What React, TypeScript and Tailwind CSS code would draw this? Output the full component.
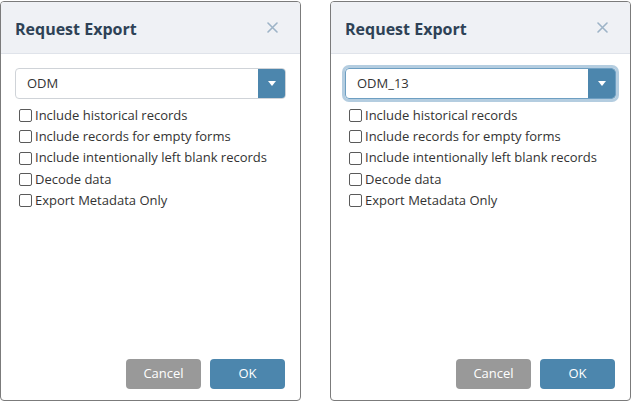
import React from "react";

const labels = [
  "Include historical records",
  "Include records for empty forms",
  "Include intentionally left blank records",
  "Decode data",
  "Export Metadata Only",
];

function Dialog({ value, focused }: { value: string; focused?: boolean }) {
  return (
    <div className="w-[301px] h-[400px] border border-[#7b7b7b] rounded-[4px] bg-white flex flex-col overflow-hidden">
      <div className="h-[52px] bg-[#eff1f5] border-b border-[#dfe3ea] flex items-center justify-between pl-[14px] pr-[22px]">
        <span className="text-[16px] font-bold text-[#2e4256] mt-[3px]">Request Export</span>
        <svg width="11" height="11" viewBox="0 0 11 11">
          <path d="M1 1L10 10M10 1L1 10" stroke="#9db3c7" strokeWidth="1.6" strokeLinecap="round" />
        </svg>
      </div>
      <div className="flex-1 flex flex-col px-[14px] pt-[14px]">
        <div
          className={
            focused
              ? "h-[31px] rounded-[4px] border border-[#6e9fc2] shadow-[0_0_0_3px_#b4cde0] flex overflow-hidden"
              : "h-[31px] rounded-[4px] border border-[#cfd3d8] flex overflow-hidden"
          }
        >
          <div className="flex-1 flex items-center pl-[11px] text-[13px] text-[#333]">{value}</div>
          <div className="w-[27px] bg-[#4c86ad] flex items-center justify-center">
            <svg width="8" height="6" viewBox="0 0 8 6">
              <path d="M0 0H8L4 5Z" fill="#fff" />
            </svg>
          </div>
        </div>
        <div className="mt-[6px] flex flex-col pl-[4px]">
          {labels.map((l) => (
            <div key={l} className="flex items-center h-[21.3px] text-[13px] text-[#333]">
              <span className="w-[13px] h-[13px] border border-[#5a5a5a] rounded-[2px] mr-[3px] shrink-0" />
              <span>{l}</span>
            </div>
          ))}
        </div>
        <div className="flex-1" />
        <div className="flex justify-end gap-[9px] pb-[11px] pr-[1px]">
          <div className="w-[75px] h-[30px] rounded-[4px] bg-[#999999] text-white text-[13px] flex items-center justify-center">
            Cancel
          </div>
          <div className="w-[75px] h-[30px] rounded-[4px] bg-[#4c86ad] text-white text-[13px] flex items-center justify-center">
            OK
          </div>
        </div>
      </div>
    </div>
  );
}

export default function App() {
  return (
    <div
      className="w-[634px] h-[402px] bg-white flex gap-[29px] pt-[1px]"
      style={{ fontFamily: '"Open Sans", "Noto Sans", sans-serif' }}
    >
      <Dialog value="ODM" />
      <Dialog value="ODM_13" focused />
    </div>
  );
}
